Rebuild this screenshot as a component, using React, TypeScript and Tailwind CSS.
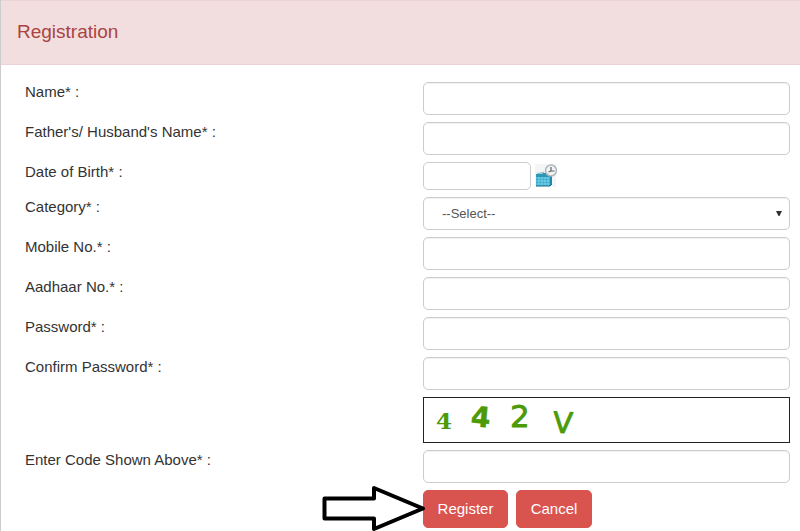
import type { ReactNode } from "react";

const control =
  "block w-full h-[33px] px-3 bg-white border border-[#ccc] rounded-[5px] text-[13px] text-[#555] shadow-[inset_0_1px_1px_rgba(0,0,0,0.06)] outline-none focus:border-[#66afe9]";

const redButton =
  "h-[38px] rounded-[5px] border border-[#d9534f] bg-[#d9534f] text-[15px] text-white hover:bg-[#c9302c] cursor-pointer";

function Row({
  id,
  label,
  children,
}: {
  id: string;
  label: string;
  children?: ReactNode;
}) {
  return (
    <div className="grid grid-cols-2 gap-x-[31px]">
      <label htmlFor={id} className="text-[15px] leading-5 text-[#333]">
        {label}
      </label>
      {children}
    </div>
  );
}

function TextRow({
  id,
  label,
  type = "text",
}: {
  id: string;
  label: string;
  type?: string;
}) {
  return (
    <Row id={id} label={label}>
      <input id={id} name={id} type={type} className={control} />
    </Row>
  );
}

function CalendarIcon() {
  return (
    <svg width="24" height="24" viewBox="0 0 24 24" aria-hidden="true">
      <rect width="21" height="23" fill="#f3f5f6" />
      <path d="M2 9l7-1.500v2.500H2z" fill="#9ccbd8" />
      <path d="M8 9h9v11l-2 2H8z" fill="#2389a6" />
      <path d="M1 10h14v12H1z" fill="#35a9ca" />
      <path d="M1 10h14v3H1z" fill="#2f97b6" />
      <path
        d="M1 14h14M1 17h14M1 20h14M4 13v9M7 13v9M10 13v9M13 13v9"
        stroke="#8edcf0"
        strokeWidth="0.7"
      />
      <path d="M1 22h14l2-2" fill="none" stroke="#17708b" />
      <circle cx="16" cy="6.5" r="5.5" fill="#f1f3f4" stroke="#b1b6b9" strokeWidth="1.5" />
      <path d="M16 3v4h3.5M16 7l-2.500 1" fill="none" stroke="#5d6468" strokeWidth="1.2" />
    </svg>
  );
}

function Captcha() {
  return (
    <svg
      width="160"
      height="44"
      viewBox="0 0 160 44"
      role="img"
      aria-label="Verification code"
      fill="#4b9a06"
    >
      <text x="12" y="31" fontFamily="DejaVu Serif, serif" fontWeight="bold" fontSize="23">
        4
      </text>
      <text
        x="47"
        y="29"
        fontFamily="DejaVu Sans, sans-serif"
        fontWeight="bold"
        fontSize="28"
        stroke="#4b9a06"
        strokeWidth="0.5"
        transform="rotate(5 57 20)"
      >
        4
      </text>
      <text
        x="86"
        y="29"
        fontFamily="DejaVu Sans, sans-serif"
        fontSize="31"
        stroke="#4b9a06"
        strokeWidth="0.8"
      >
        2
      </text>
      <text
        x="129"
        y="35"
        fontFamily="DejaVu Sans, sans-serif"
        fontSize="29"
        stroke="#4b9a06"
        strokeWidth="0.8"
        transform="rotate(3 139 25)"
      >
        V
      </text>
    </svg>
  );
}

function PointerArrow() {
  return (
    <svg
      className="absolute -left-[101px] -top-[5px] pointer-events-none"
      width="104"
      height="48"
      viewBox="0 0 104 48"
      aria-hidden="true"
    >
      <path
        d="M2.500 13.500H52V3L101 23.500L52 44V33.500H2.500Z"
        fill="#fff"
        stroke="#000"
        strokeWidth="4"
        strokeLinejoin="round"
      />
    </svg>
  );
}

export default function App() {
  return (
    <main className="min-h-screen overflow-x-hidden bg-white font-['Liberation_Sans',Arial,sans-serif]">
      <section className="min-h-screen border-l border-[#ccc]">
        <header className="border-y border-[#ebd3d6] bg-[#f2dede] px-4 pt-[15px] pb-4">
          <h1 className="text-[19px] leading-8 text-[#a94442]">Registration</h1>
        </header>

        <form
          className="flex flex-col gap-[7px] pt-[17px] pl-6 pr-[10px]"
          onSubmit={(e) => e.preventDefault()}
        >
          <TextRow id="name" label="Name* :" />
          <TextRow id="guardian" label="Father's/ Husband's Name* :" />

          <Row id="dob" label="Date of Birth* :">
            <div className="flex items-center gap-1">
              <input
                id="dob"
                name="dob"
                type="text"
                className="h-7 w-[108px] rounded-[5px] border border-[#ccc] bg-white px-2 text-[13px] text-[#555] outline-none"
              />
              <button type="button" aria-label="Pick a date" className="cursor-pointer">
                <CalendarIcon />
              </button>
            </div>
          </Row>

          <Row id="category" label="Category* :">
            <div className="relative">
              <select
                id="category"
                name="category"
                className={`${control} appearance-none pl-[18px]`}
              >
                <option>--Select--</option>
              </select>
              <svg
                className="absolute right-2 top-[13px] pointer-events-none"
                width="6"
                height="7"
                viewBox="0 0 6 7"
                aria-hidden="true"
              >
                <path d="M0 1h6L3.500 6h-1z" fill="#333" />
              </svg>
            </div>
          </Row>

          <TextRow id="mobile" label="Mobile No.* :" />
          <TextRow id="aadhaar" label="Aadhaar No.* :" />
          <TextRow id="password" label="Password* :" type="password" />
          <TextRow id="confirm" label="Confirm Password* :" type="password" />

          <div className="grid grid-cols-2 gap-x-[31px]">
            <div className="col-start-2 h-[46px] border border-[#222]">
              <Captcha />
            </div>
          </div>

          <TextRow id="code" label="Enter Code Shown Above* :" />

          <div className="grid grid-cols-2 gap-x-[31px]">
            <div className="relative col-start-2 flex gap-2">
              <button type="submit" className={`${redButton} w-[85px]`}>
                Register
              </button>
              <button type="button" className={`${redButton} w-[76px]`}>
                Cancel
              </button>
              <PointerArrow />
            </div>
          </div>
        </form>
      </section>
    </main>
  );
}
